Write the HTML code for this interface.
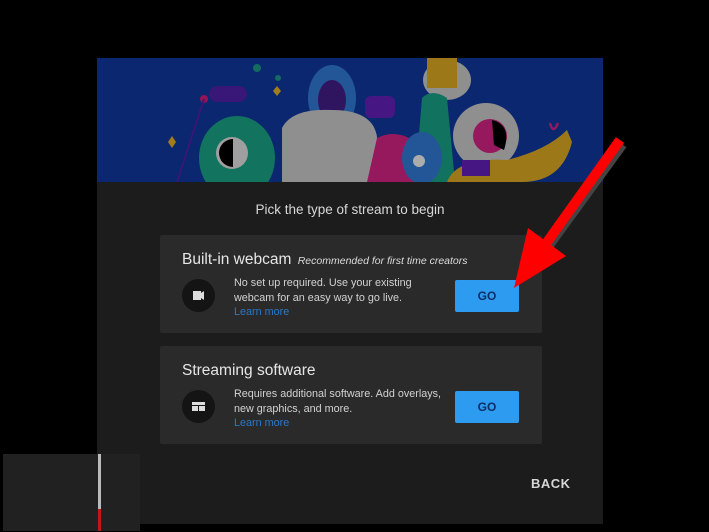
<!DOCTYPE html>
<html><head><meta charset="utf-8"><style>
*{margin:0;padding:0;box-sizing:border-box}
body{width:709px;height:532px;background:#000;position:relative;overflow:hidden;font-family:"Liberation Sans",Roboto,sans-serif}
.dlg{position:absolute;left:97px;top:58px;width:506px;height:466px;background:#1c1c1c}
.ban{position:absolute;left:0;top:0;width:506px;height:124px;background:#0d3290;overflow:hidden}
.dim{position:absolute;left:0;top:0;width:506px;height:124px;background:rgba(0,0,0,.22)}
.title{position:absolute;top:144px;width:100%;text-align:center;color:#d8d8d8;font-size:13.5px}
.card{position:absolute;left:63px;width:382px;height:98px;background:#2a2a2a;border-radius:2px}
.h{position:absolute;left:22px;top:16px;color:#e6e6e6;font-size:15.5px}
.h i{font-size:10.5px;color:#ddd;margin-left:2px}
.ic{position:absolute;left:22px;top:44px;width:33px;height:33px;border-radius:50%;background:#141414}
.d{position:absolute;left:74px;top:41px;color:#d2d2d2;font-size:10.8px;line-height:14.5px}
.d span{color:#2a78c8}
.go{position:absolute;left:295px;top:45px;width:64px;height:32px;background:#2c9bf0;border-radius:2px;color:#0a2f66;font-weight:bold;font-size:12px;text-align:center;line-height:32px}
.back{position:absolute;left:434px;top:418px;color:#d6d6d6;font-weight:bold;font-size:13px;letter-spacing:.5px}
</style></head><body>
<div class="dlg">
 <div class="ban"><svg width="506" height="124">
  <circle cx="160" cy="10" r="4" fill="#1a8a7a"/><circle cx="181" cy="20" r="3" fill="#1a8a7a"/>
  <rect x="112" y="28" width="38" height="16" rx="8" fill="#4a1e9a"/><circle cx="107" cy="41" r="4" fill="#c01a6a"/>
  <line x1="107" y1="41" x2="80" y2="124" stroke="#4a1e9a" stroke-width="2"/>
  <path d="M75 78l4 6 -4 6 -4-6z" fill="#d0a020"/><path d="M180 28l4 5 -4 5 -4-5z" fill="#d0a020"/>
  <ellipse cx="140" cy="100" rx="38" ry="42" fill="#18947a"/><ellipse cx="135" cy="95" rx="16" ry="16" fill="#ccc"/><path d="M122 95a14 14 0 0 0 14 14v-28a14 14 0 0 0-14 14z" fill="#000"/>
  <ellipse cx="235" cy="40" rx="24" ry="33" fill="#2e6fc0"/><ellipse cx="235" cy="42" rx="14" ry="20" fill="#3d1a7a"/>
  <path d="M185 70q10-20 50-18q50 0 45 40l0 32h-95z" fill="#b8b8b8"/>
  <rect x="268" y="38" width="30" height="22" rx="6" fill="#5a1ea8"/>
  <ellipse cx="350" cy="22" rx="24" ry="20" fill="#b8b8b8"/><rect x="330" y="0" width="30" height="30" fill="#c89a20"/>
  <path d="M325 40q10-10 25 0l8 84h-40z" fill="#17937a"/>
  <path d="M280 80q20-10 40 5l0 39h-50z" fill="#c02078"/>
  <ellipse cx="325" cy="100" rx="20" ry="26" fill="#2e6fc0"/><circle cx="322" cy="103" r="6" fill="#ddd"/>
  <circle cx="389" cy="78" r="33" fill="#b8b8b8"/><circle cx="393" cy="78" r="17" fill="#c02078"/><path d="M395 62q20 5 12 30l-10-5z" fill="#000"/>
  <path d="M350 124q10-25 60-22q40-10 60-30l5 12q-10 40-50 40z" fill="#c89a20"/><rect x="365" y="102" width="28" height="16" fill="#5a1ea8"/>
  <path d="M453 65q3 12 8 0" stroke="#c02078" stroke-width="2.5" fill="none"/>
 </svg><div class="dim"></div></div>
 <div class="title">Pick the type of stream to begin</div>
 <div class="card" style="top:177px">
  <div class="h">Built-in webcam <i>Recommended for first time creators</i></div>
  <div class="ic"><svg width="33" height="33"><rect x="11" y="12" width="8" height="9" fill="#ddd"/><path d="M19 14l3-2v9l-3-2z" fill="#ddd"/></svg></div>
  <div class="d">No set up required. Use your existing<br>webcam for an easy way to go live.<br><span>Learn more</span></div>
  <div class="go">GO</div>
 </div>
 <div class="card" style="top:288px">
  <div class="h">Streaming software</div>
  <div class="ic"><svg width="33" height="33"><rect x="10" y="12" width="13" height="3" fill="#ddd"/><rect x="10" y="16" width="6" height="5" fill="#ddd"/><rect x="17" y="16" width="6" height="5" fill="#ddd"/></svg></div>
  <div class="d">Requires additional software. Add overlays,<br>new graphics, and more.<br><span>Learn more</span></div>
  <div class="go">GO</div>
 </div>
 <div class="back">BACK</div>
</div>
<div style="position:absolute;left:3px;top:454px;width:137px;height:77px;background:#212121"></div>
<div style="position:absolute;left:98px;top:454px;width:3px;height:56px;background:#bbb"></div>
<div style="position:absolute;left:98px;top:509px;width:3px;height:22px;background:#c01818"></div>
<svg style="position:absolute;left:0;top:0" width="709" height="532">
 <line x1="620" y1="142" x2="545" y2="245" stroke="#444" stroke-width="11" transform="translate(2,2)"/>
 <line x1="620" y1="140" x2="545" y2="245" stroke="#f00" stroke-width="10"/>
 <path d="M528 228L566 256L514 288z" fill="#f00"/>
</svg>
</body></html>
